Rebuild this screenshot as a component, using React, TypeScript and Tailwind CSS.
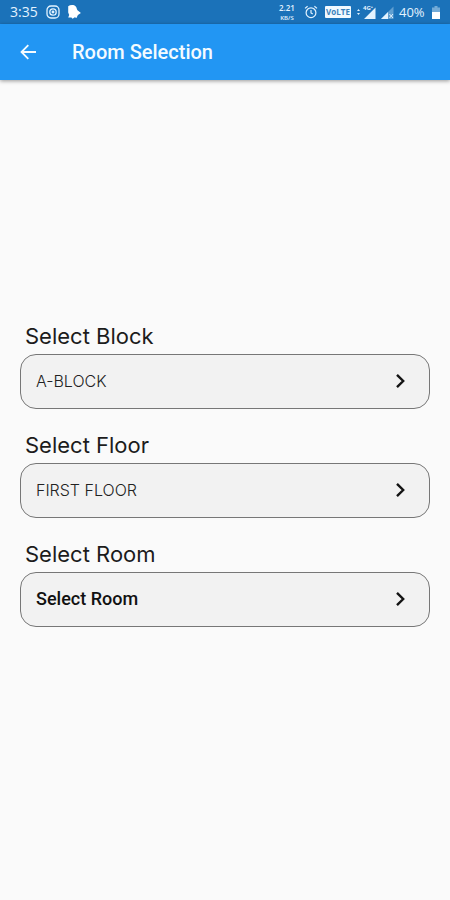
import { useState } from 'react';

const FIELDS = [
  { id: 'block', label: 'Select Block', value: 'A-BLOCK', chosen: true },
  { id: 'floor', label: 'Select Floor', value: 'FIRST FLOOR', chosen: true },
  { id: 'room', label: 'Select Room', value: 'Select Room', chosen: false },
];

function StatusBar() {
  return (
    <div className="flex h-6 items-center justify-between bg-[#1b72b9] pr-[10px] pl-[10px] font-['Open_Sans',sans-serif] text-[#e3f3ff]">
      <div className="flex items-center">
        <span className="w-9 text-[14px] leading-4">3:35</span>
        <svg width="14" height="14" viewBox="0 0 14 14" fill="none" stroke="currentColor" strokeWidth="1.3">
          <rect x="1" y="1" width="12" height="12" rx="4" />
          <circle cx="7" cy="7" r="3.2" />
          <circle cx="7" cy="7" r="0.8" fill="currentColor" />
        </svg>
        <svg className="ml-1.5" width="16" height="16" viewBox="0 0 16 16" fill="white">
          <path d="M2.2 2.2C4.5.6 9 .6 10.3 3.2c.5 1 .5 2.2 1.2 3l3.4 2.8-3 2-1.4 3-1.7-.8-2.2 1.5-1.2-1.3H2.2L3.2 11 2.2 8.6Z" />
        </svg>
      </div>
      <div className="flex items-center">
        <div className="flex w-[18px] flex-col items-center">
          <span className="text-[8px] leading-[12px] font-semibold">2.21</span>
          <span className="text-[6px] leading-[8px] font-semibold">KB/S</span>
        </div>
        <svg className="ml-2" width="14" height="14" viewBox="0 0 14 14" fill="none" stroke="currentColor" strokeWidth="1.2">
          <circle cx="7" cy="7.7" r="4.9" />
          <path d="M7 5v3l1.8 1.1M1 3.4l2.6-2.2M13 3.4l-2.6-2.2" />
        </svg>
        <span className="ml-[7px] flex h-3 w-[26px] items-center justify-center rounded-[1px] bg-[#f1f9ff] text-[8px] leading-3 font-bold text-[#3b82bb]">
          VoLTE
        </span>
        <svg className="ml-1.5" width="19" height="16" viewBox="0 0 19 16" fill="currentColor">
          <path d="M0 7l1.5-2L3 7ZM0 9h3l-1.5 2ZM18.5 3.5V15H7Z" />
          <text x="6" y="6" fontSize="6" fontWeight="700">4G⁺</text>
        </svg>
        <svg className="ml-1" width="14" height="16" viewBox="0 0 14 16" fill="currentColor">
          <path d="M13.5 2.5V15H1Z" opacity="0.35" />
          <path d="M8 8v7H1Z" />
          <path d="M9.5 10l3.5 4M13 10l-3.5 4" stroke="currentColor" strokeWidth="1" />
        </svg>
        <span className="ml-[5px] w-[30px] text-[13px] leading-4">40%</span>
        <svg className="ml-[3px]" width="8" height="13" viewBox="0 0 8 13">
          <path d="M2.5 0h3v1.5H8V7H0V1.5h2.5Z" fill="#74abd7" />
          <path d="M0 6h8v7H0Z" fill="white" />
        </svg>
      </div>
    </div>
  );
}

export default function App() {
  const [active, setActive] = useState('');

  return (
    <div className="flex min-h-screen flex-col bg-[#fafafa] font-['Roboto',sans-serif]">
      <StatusBar />

      <header className="flex h-14 items-center bg-[#2296f3] px-[18px] text-[#f4fbff] shadow-[0_1px_4px_rgba(0,0,0,0.4)]">
        <button type="button" aria-label="Back" className="flex w-[54px] items-center">
          <svg width="20" height="20" viewBox="0 0 20 20" fill="none" stroke="currentColor" strokeWidth="1.8">
            <path d="M18 10H4M10.3 3.2L3.5 10l6.8 6.8" />
          </svg>
        </button>
        <h1 className="text-[20px] leading-6 font-medium">Room Selection</h1>
      </header>

      <main className="flex flex-1 flex-col justify-center gap-[22px] px-5 pb-8">
        {FIELDS.map((field) => (
          <section key={field.id}>
            <h2
              id={`${field.id}-label`}
              className="pb-1 pl-[5px] font-['Inter',sans-serif] text-[22px] leading-7 text-[#1c1c1c]"
            >
              {field.label}
            </h2>
            <button
              type="button"
              aria-labelledby={`${field.id}-label ${field.id}-value`}
              aria-pressed={active === field.id}
              onClick={() => setActive(field.id)}
              className="flex h-[55px] w-full items-center justify-between rounded-2xl border border-[#777777] bg-[#f2f2f2] pr-[22px] pl-[15px] text-left text-[#222222]"
            >
              <span
                id={`${field.id}-value`}
                className={
                  field.chosen
                    ? "font-['Inter',sans-serif] text-[16px] leading-6 font-light"
                    : 'text-[18px] leading-6 font-medium text-[#111111]'
                }
              >
                {field.value}
              </span>
              <svg width="12" height="16" viewBox="0 0 12 16" fill="none" stroke="#151515" strokeWidth="2.4">
                <path d="M2 1.8L8.2 8 2 14.2" />
              </svg>
            </button>
          </section>
        ))}
      </main>
    </div>
  );
}
